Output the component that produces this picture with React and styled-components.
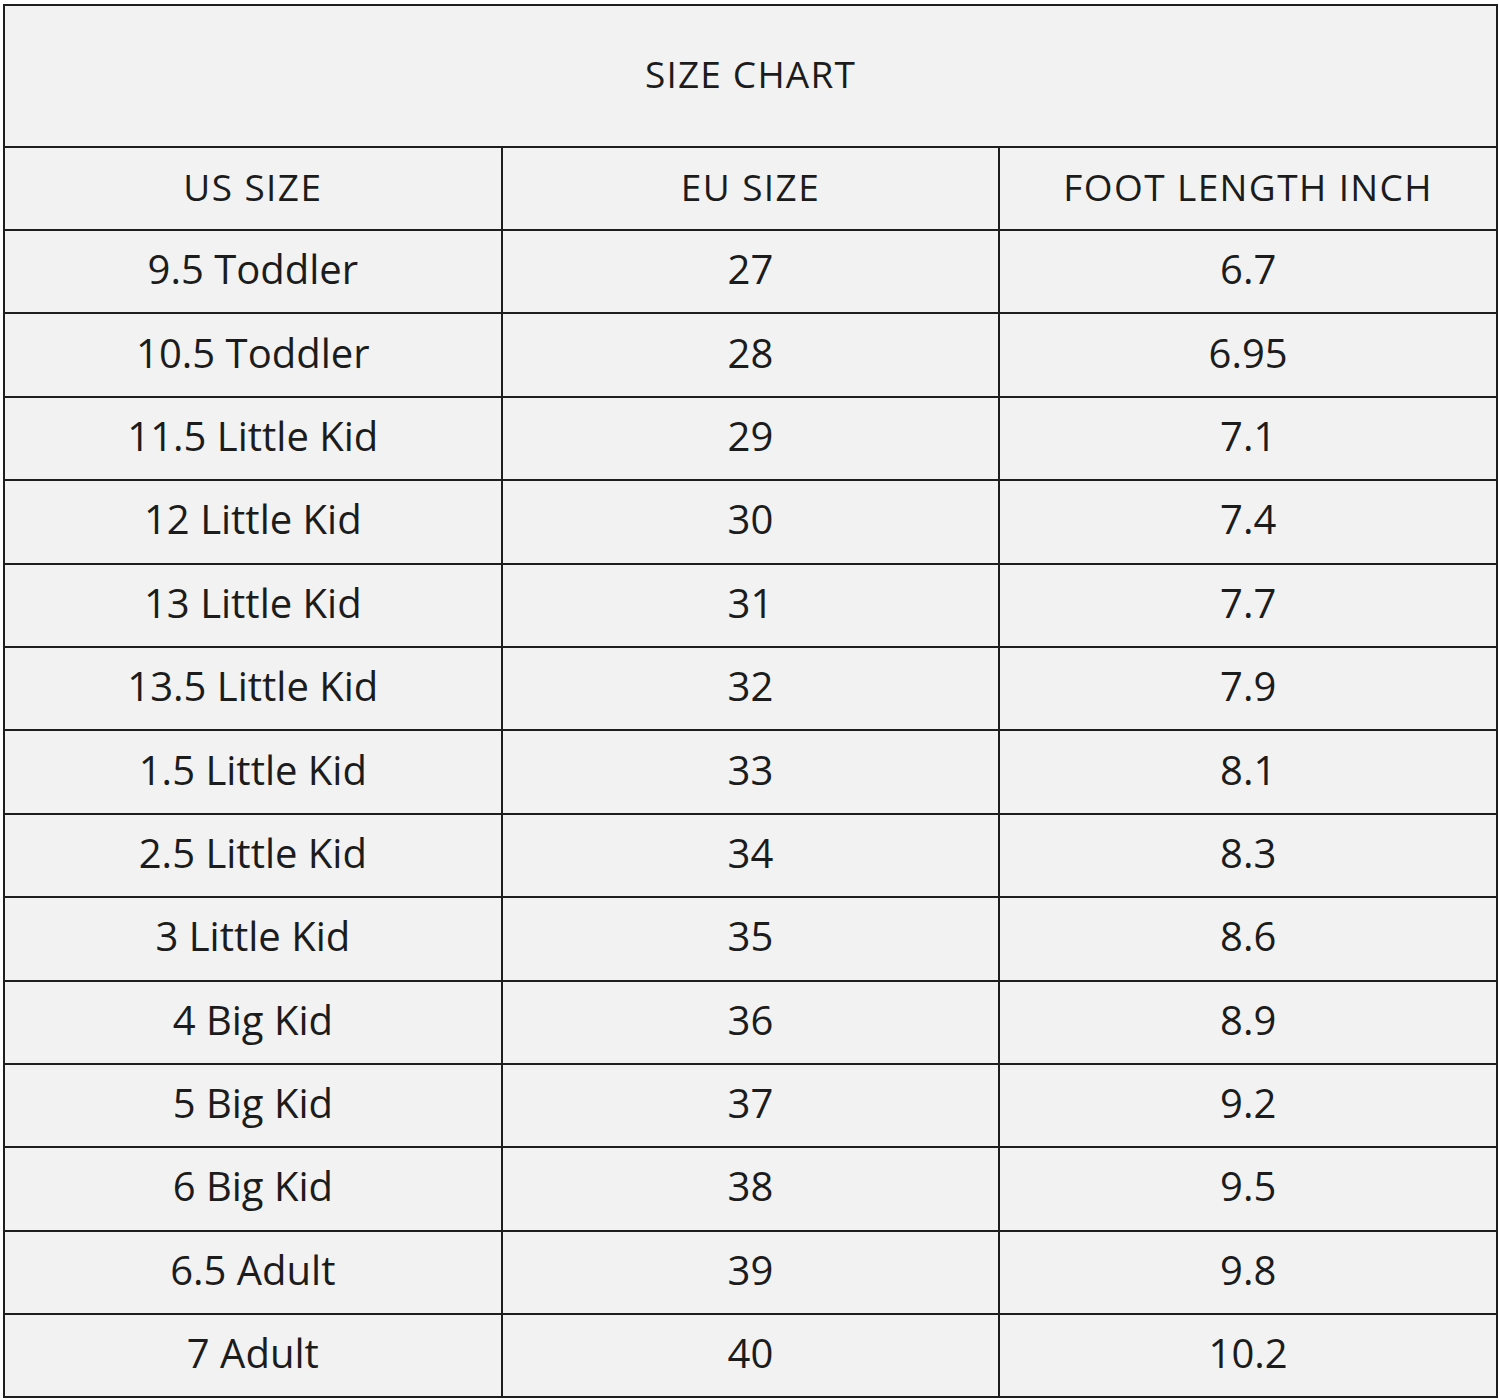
import React from 'react';
import styled, { createGlobalStyle } from 'styled-components';

const GlobalStyle = createGlobalStyle`
  body {
    margin: 0;
    background: #ffffff;
    font-family: "Open Sans", Lato, sans-serif;
  }
`;

const Page = styled.div`
  padding: 4px 0 0 3px;
`;

const Table = styled.table`
  width: 1495px;
  border-collapse: collapse;
  table-layout: fixed;
  background: #f2f2f2;
  color: #1c1c1c;
`;

const TitleCell = styled.th`
  height: 134px;
  padding: 0 0 6px;
  border: 2px solid #1e1e1e;
  font-size: 37px;
  font-weight: 400;
  letter-spacing: 1.2px;
  text-align: center;
`;

const HeadCell = styled.th`
  height: 76px;
  padding: 0 0 5px;
  border: 2px solid #1e1e1e;
  font-size: 37px;
  font-weight: 400;
  letter-spacing: 1.4px;
  text-align: center;
`;

const Cell = styled.td`
  height: 75.4px;
  padding: 0 0 6px;
  border: 2px solid #1e1e1e;
  font-size: 40px;
  text-align: center;
`;

const rows = [
  ['9.5 Toddler', '27', '6.7'],
  ['10.5 Toddler', '28', '6.95'],
  ['11.5 Little Kid', '29', '7.1'],
  ['12 Little Kid', '30', '7.4'],
  ['13 Little Kid', '31', '7.7'],
  ['13.5 Little Kid', '32', '7.9'],
  ['1.5 Little Kid', '33', '8.1'],
  ['2.5 Little Kid', '34', '8.3'],
  ['3 Little Kid', '35', '8.6'],
  ['4 Big Kid', '36', '8.9'],
  ['5 Big Kid', '37', '9.2'],
  ['6 Big Kid', '38', '9.5'],
  ['6.5 Adult', '39', '9.8'],
  ['7 Adult', '40', '10.2'],
];

const App = () => (
  <Page>
    <GlobalStyle />
    <Table>
      <thead>
        <tr>
          <TitleCell colSpan={3}>SIZE CHART</TitleCell>
        </tr>
        <tr>
          <HeadCell>US SIZE</HeadCell>
          <HeadCell>EU SIZE</HeadCell>
          <HeadCell>FOOT LENGTH INCH</HeadCell>
        </tr>
      </thead>
      <tbody>
        {rows.map((row) => (
          <tr key={row[0]}>
            {row.map((value, i) => (
              <Cell key={i}>{value}</Cell>
            ))}
          </tr>
        ))}
      </tbody>
    </Table>
  </Page>
);

export default App;
